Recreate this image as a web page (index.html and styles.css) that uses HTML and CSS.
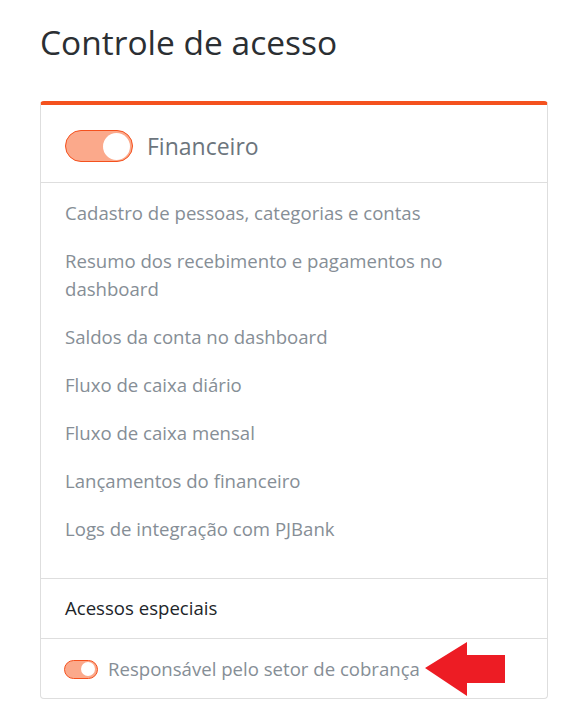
FILE: index.html
```html
<!DOCTYPE html>
<html lang="pt-BR">
<head>
<meta charset="utf-8">
<title>Controle de acesso</title>
<link rel="stylesheet" href="styles.css">
</head>
<body>
<main class="page">
  <h1 class="title">Controle de acesso</h1>
  <section class="card">
    <header class="card-head">
      <span class="toggle toggle-lg"><span class="knob"></span></span>
      <span class="head-label">Financeiro</span>
    </header>
    <ul class="perm-list">
      <li>Cadastro de pessoas, categorias e contas</li>
      <li>Resumo dos recebimento e pagamentos no dashboard</li>
      <li>Saldos da conta no dashboard</li>
      <li>Fluxo de caixa diário</li>
      <li>Fluxo de caixa mensal</li>
      <li>Lançamentos do financeiro</li>
      <li>Logs de integração com PJBank</li>
    </ul>
    <div class="special-title">Acessos especiais</div>
    <div class="special-row">
      <span class="toggle toggle-sm"><span class="knob"></span></span>
      <span class="special-label">Responsável pelo setor de cobrança</span>
      <svg class="arrow" width="82" height="56" viewBox="0 0 82 56" aria-hidden="true">
        <polygon points="0,26 42,0 42,13 80,13 80,41 42,41 42,54" fill="#ed1c24"/>
      </svg>
    </div>
  </section>
</main>
</body>
</html>
```
FILE: styles.css
```css
* { box-sizing: border-box; }
html, body { margin: 0; padding: 0; background: #fff; }
body {
  font-family: "Open Sans", "Noto Sans", sans-serif;
  color: #333;
}
.page {
  padding: 20px 38px 0 40px;
}
.title {
  margin: 0 0 37px;
  font-size: 33.5px;
  font-weight: 400;
  line-height: 44px;
  color: #2b2f33;
}
.card {
  border: 1px solid #dedede;
  border-top: 4px solid #f4511e;
  border-radius: 4px;
  width: 508px;
}
.card-head {
  display: flex;
  align-items: center;
  gap: 14px;
  padding: 25px 24px 20px;
  border-bottom: 1px solid #dedede;
}
.toggle {
  position: relative;
  display: inline-block;
  background: #fba98b;
  border: 1px solid #f4511e;
  flex: none;
}
.toggle-lg { width: 68px; height: 32px; border-radius: 16px; }
.toggle-sm { width: 34px; height: 19px; border-radius: 10px; }
.knob {
  position: absolute;
  background: #fff;
  border-radius: 50%;
}
.toggle-lg .knob { width: 27px; height: 27px; right: 2px; top: 1.5px; }
.toggle-sm .knob { width: 14px; height: 14px; right: 2px; top: 1.5px; }
.head-label {
  font-size: 23px;
  color: #6c757d;
  line-height: 32px;
}
.perm-list {
  list-style: none;
  margin: 0;
  padding: 16px 24px 15px;
  border-bottom: 1px solid #dedede;
}
.perm-list li {
  font-size: 18.6px;
  line-height: 28px;
  color: #868e96;
  margin-bottom: 20px;
  padding-right: 70px;
}
.special-title {
  font-size: 18.6px;
  line-height: 28px;
  color: #212529;
  padding: 15px 24px 16px;
  border-bottom: 1px solid #dedede;
}
.special-row {
  position: relative;
  display: flex;
  align-items: center;
  gap: 10px;
  padding: 16px 23px 15px;
}
.special-label {
  font-size: 18.6px;
  line-height: 28px;
  color: #868e96;
}
.arrow {
  position: absolute;
  left: 384px;
  top: 3px;
}
```
